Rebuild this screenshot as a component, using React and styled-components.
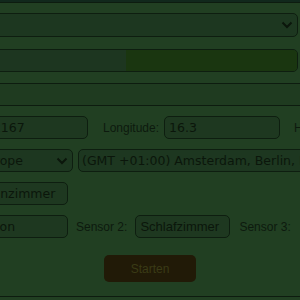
import React from "react";
import styled, { createGlobalStyle } from "styled-components";

const GlobalStyle = createGlobalStyle`
  html, body {
    margin: 0;
    padding: 0;
    background: #213f22;
    overflow: hidden;
  }
  body {
    width: 300px;
    height: 300px;
    font-family: "Liberation Sans", Arial, sans-serif;
  }
`;

const Page = styled.div`
  display: flex;
  flex-direction: column;
  width: 300px;
  height: 300px;
`;

const TopStrip = styled.div`
  height: 2px;
  background: #11281c;
  border-bottom: 1px solid #0d1c0f;
  margin-bottom: 10px;
`;

const Shifted = styled.div`
  display: flex;
  flex-direction: column;
  gap: ${(p) => p.$gap || 0}px;
  margin-left: -32px;
  width: 330px;
`;

const SelectBox = styled.div`
  display: flex;
  align-items: center;
  justify-content: space-between;
  box-sizing: border-box;
  height: ${(p) => p.$h || 23}px;
  width: ${(p) => (p.$w ? `${p.$w}px` : "100%")};
  flex: none;
  margin-left: ${(p) => p.$ml || 0}px;
  padding: 0 4px 0 3px;
  background: #1d3720;
  border: 1px solid #0e1e10;
  border-radius: 5px;
  font-family: "DejaVu Sans", sans-serif;
  font-size: 12.5px;
  color: #0b160b;
  white-space: nowrap;
  overflow: hidden;
`;

const Track = styled.div`
  display: flex;
  box-sizing: border-box;
  height: 23px;
  margin-top: 12px;
  border: 1px solid #0e1e10;
  border-radius: 5px;
  background: #1d3620;
  overflow: hidden;
`;

const Fill = styled.div`
  margin-left: auto;
  height: 100%;
  background: #1a3610;
`;

const Divider = styled.div`
  height: 21px;
  margin-top: 11px;
  background: #1f3b20;
  border-top: 1px solid #0d1c0f;
  border-bottom: 1px solid #0d1c0f;
  margin-bottom: 10px;
`;

const Row = styled.div`
  display: flex;
  align-items: center;
  height: 23px;
  white-space: nowrap;
`;

const Input = styled.div`
  display: flex;
  align-items: center;
  box-sizing: border-box;
  flex: none;
  height: 23px;
  width: ${(p) => p.$w}px;
  padding: 0 4px;
  background: #1e3820;
  border: 1px solid #0e1e10;
  border-radius: 5px;
  font-family: ${(p) =>
    p.$plain ? '"Liberation Sans", Arial, sans-serif' : '"DejaVu Sans", sans-serif'};
  font-size: ${(p) => (p.$plain ? 13 : 12.5)}px;
  color: #0b160b;
  overflow: hidden;
`;

const Label = styled.span`
  flex: none;
  margin: 0 ${(p) => p.$mr}px 0 ${(p) => p.$ml}px;
  font-size: 12px;
  color: #0d1a0e;
`;

const ButtonRow = styled.div`
  display: flex;
  justify-content: center;
  margin-top: 17px;
  padding-bottom: 14px;
  border-bottom: 1px solid #0d1c0f;
`;

const StartButton = styled.button`
  width: 92px;
  height: 27px;
  border: none;
  border-radius: 5px;
  background: #211a07;
  color: #3a3b16;
  font-family: "Liberation Sans", Arial, sans-serif;
  font-size: 12px;
  padding: 0;
`;

function Chevron() {
  return (
    <svg width="12" height="8" viewBox="0 0 12 8">
      <path d="M1.5 1.5 L6 6 L10.5 1.5" fill="none" stroke="#0b160b" strokeWidth="2" />
    </svg>
  );
}

export default function App() {
  const progress = 0.52;
  return (
    <Page>
      <GlobalStyle />
      <TopStrip />
      <Shifted>
        <SelectBox $h={24}>
          <span></span>
          <Chevron />
        </SelectBox>
        <Track>
          <Fill style={{ width: `${progress * 100}%` }} />
        </Track>
      </Shifted>
      <Divider />
      <Shifted $gap={10}>
        <Row>
          <Input $w={120}>48.2167</Input>
          <Label $ml={15} $mr={5}>Longitude:</Label>
          <Input $w={116}>16.3</Input>
          <Label $ml={14} $mr={7}>Höhe:</Label>
        </Row>
        <Row>
          <SelectBox $w={98} $ml={7}>
            <span>Europe</span>
            <Chevron />
          </SelectBox>
          <SelectBox $w={260} $ml={5}>
            <span>(GMT +01:00) Amsterdam, Berlin, Rom</span>
          </SelectBox>
        </Row>
        <Row>
          <Input $w={100}>Wohnzimmer</Input>
        </Row>
        <Row>
          <Input $w={100}>Balkon</Input>
          <Label $ml={8} $mr={8}>Sensor 2:</Label>
          <Input $w={95} $plain>Schlafzimmer</Input>
          <Label $ml={9} $mr={9}>Sensor 3:</Label>
          <Input $w={90} $plain>Küche</Input>
        </Row>
      </Shifted>
      <ButtonRow>
        <StartButton>Starten</StartButton>
      </ButtonRow>
    </Page>
  );
}
